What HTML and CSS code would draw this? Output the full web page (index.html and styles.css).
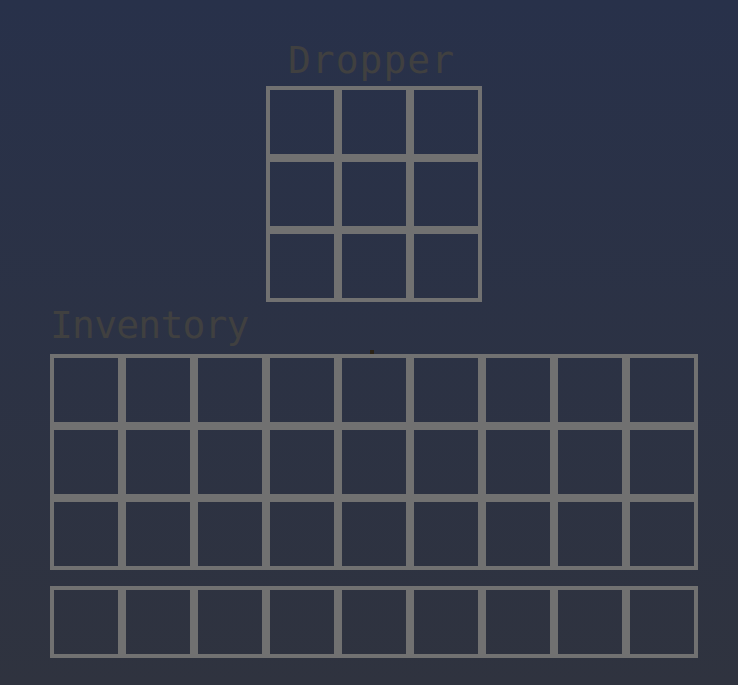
FILE: index.html
```html
<!DOCTYPE html>
<html lang="en">
<head>
  <meta charset="UTF-8">
  <meta name="viewport" content="width=device-width, initial-scale=1.0">
  <title>Dropper</title>
  <link rel="stylesheet" href="styles.css">
</head>
<body>

  <main id="pantalla">
    <section id="dropper">
      <h1 class="titulo centrado">Dropper</h1>
      <div class="rejilla rejilla-3">
        <div class="slot"></div><div class="slot"></div><div class="slot"></div>
        <div class="slot"></div><div class="slot"></div><div class="slot"></div>
        <div class="slot"></div><div class="slot"></div><div class="slot"></div>
      </div>
    </section>

    <section id="inventario">
      <h2 class="titulo">Inventory</h2>
      <div class="rejilla rejilla-9" id="mochila"></div>
      <div class="rejilla rejilla-9" id="barra"></div>
    </section>

    <div id="cursor"></div>
  </main>

  <script>
    // 27 huecos de mochila y 9 de la barra rápida
    function rellenar(id, cuantos) {
      const rejilla = document.getElementById(id);
      for (let i = 0; i < cuantos; i++) {
        const slot = document.createElement("div");
        slot.className = "slot";
        rejilla.appendChild(slot);
      }
    }

    rellenar("mochila", 27);
    rellenar("barra", 9);
  </script>
</body>
</html>
```

FILE: styles.css
```css
html, body {
  height: 100%;
}
body {
  margin: 0;
  font-family: "DejaVu Sans Mono", "Liberation Mono", monospace;
  background-color: #2b3345;
  background-image: linear-gradient(to bottom, #28314a, #2f333f);
  background-repeat: no-repeat;
}
#pantalla {
  position: relative;
  width: 648px;
  margin-left: 50px;
  padding-top: 41px;
}
.titulo {
  margin: 0;
  font-size: 38px;
  line-height: 38px;
  font-weight: normal;
  letter-spacing: 1px;
  color: #404040;
}
.centrado {
  text-align: center;
  padding-right: 5px;
}
#dropper .titulo {
  margin-bottom: 7px;
}
.rejilla {
  display: grid;
  grid-auto-rows: 72px;
}
.rejilla-3 {
  grid-template-columns: repeat(3, 72px);
  width: 216px;
  margin: 0 auto;
}
.rejilla-9 {
  grid-template-columns: repeat(9, 72px);
}
.slot {
  box-sizing: border-box;
  width: 72px;
  height: 72px;
  border: 4px solid #717171;
}
#inventario .titulo {
  margin-top: 4px;
  margin-bottom: 10px;
  letter-spacing: -0.8px;
}
#barra {
  margin-top: 16px;
}
#cursor {
  position: absolute;
  left: 320px;
  top: 350px;
  width: 4px;
  height: 4px;
  background-color: #2a2216;
}
```
